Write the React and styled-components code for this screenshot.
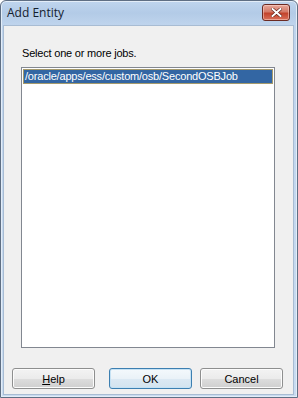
import React from 'react'
import styled, { createGlobalStyle } from 'styled-components'

const GlobalStyle = createGlobalStyle`
  html, body {
    margin: 0;
    padding: 0;
    background: #ffffff;
  }
`

const Window = styled.div`
  width: 298px;
  height: 398px;
  box-sizing: border-box;
  border: 1px solid #5f6f84;
  border-radius: 6px 6px 0 0;
  background: linear-gradient(180deg, #bfd5ee 0px, #b3cbe7 12px, #bfd4ed 24px, #c9dcf1 100%);
  display: flex;
  flex-direction: column;
  box-shadow: inset 0 0 0 1px #e3edf8;
`

const TitleBar = styled.div`
  height: 24px;
  display: flex;
  align-items: center;
  justify-content: space-between;
  padding: 0 7px 0 6px;
  box-sizing: border-box;
`

const Title = styled.span`
  font-family: "Open Sans", "DejaVu Sans", sans-serif;
  font-size: 12px;
  color: #14202e;
  margin-top: -1px;
`

const CloseButton = styled.div`
  width: 28px;
  height: 17px;
  margin-top: -2px;
  box-sizing: border-box;
  border: 1px solid #6b2a22;
  border-radius: 3px;
  background: linear-gradient(180deg, #e8a89b 0%, #d47a68 45%, #c2432c 55%, #d9705a 100%);
  display: flex;
  align-items: center;
  justify-content: center;
  box-shadow: inset 0 0 0 1px rgba(255, 220, 210, 0.5);
`

const Client = styled.div`
  flex: 1;
  margin: 0 3px 2px 2px;
  background: #f0f0f0;
  border: 1px solid #a8bcd3;
  display: flex;
  flex-direction: column;
  padding: 21px 18px 0 17px;
`

const Label = styled.div`
  font-family: "Liberation Sans", Arial, sans-serif;
  font-size: 11px;
  letter-spacing: -0.2px;
  color: #000000;
  line-height: 13px;
  padding-left: 1px;
  margin-bottom: 7px;
`

const ListBox = styled.div`
  height: 281px;
  box-sizing: border-box;
  border: 1px solid #828790;
  background: #ffffff;
  padding: 1px;
`

const ListItem = styled.div`
  height: 15px;
  box-sizing: border-box;
  font-family: "Liberation Sans", Arial, sans-serif;
  font-size: 11px;
  letter-spacing: -0.2px;
  line-height: 13px;
  padding-left: 1px;
  color: ${p => (p.selected ? '#ffffff' : '#000000')};
  background: ${p => (p.selected ? '#3366a3' : 'transparent')};
  border: 1px solid ${p => (p.selected ? '#a59a6c' : 'transparent')};
  white-space: nowrap;
`

const ButtonRow = styled.div`
  display: flex;
  margin: 20px -8px 0 -9px;
  gap: 8px;
`

const Button = styled.button`
  width: 84px;
  height: 21px;
  box-sizing: border-box;
  padding: 0;
  border: 1px solid ${p => (p.primary ? '#3c7fb1' : '#8e8f8f')};
  border-radius: 3px;
  background: ${p =>
    p.primary
      ? 'linear-gradient(180deg, #f4f9fc 0%, #eaf2f8 50%, #dce9f3 51%, #d3e3ef 100%)'
      : 'linear-gradient(180deg, #f3f3f3 0%, #ebebeb 50%, #dddddd 51%, #cfcfcf 100%)'};
  box-shadow: inset 0 0 0 1px ${p => (p.primary ? '#c6e2f4' : '#fcfcfc')};
  font-family: "Liberation Sans", Arial, sans-serif;
  font-size: 11px;
  color: #000000;
  margin-right: ${p => (p.spaced ? '6px' : '0')};
`

const Mnemonic = styled.span`
  text-decoration: underline;
`

export default function App() {
  return (
    <>
      <GlobalStyle />
      <Window>
        <TitleBar>
          <Title>Add Entity</Title>
          <CloseButton>
            <svg width="11" height="9" viewBox="0 0 11 9">
              <path d="M1.5 1 L9.5 8 M9.5 1 L1.5 8" stroke="#5a1a12" strokeWidth="3.2" strokeLinecap="square" />
              <path d="M1.5 1 L9.5 8 M9.5 1 L1.5 8" stroke="#ffffff" strokeWidth="2" strokeLinecap="square" />
            </svg>
          </CloseButton>
        </TitleBar>
        <Client>
          <Label>Select one or more jobs.</Label>
          <ListBox>
            <ListItem selected>/oracle/apps/ess/custom/osb/SecondOSBJob</ListItem>
          </ListBox>
          <ButtonRow>
            <Button spaced>
              <Mnemonic>H</Mnemonic>elp
            </Button>
            <Button primary>OK</Button>
            <Button>Cancel</Button>
          </ButtonRow>
        </Client>
      </Window>
    </>
  )
}
